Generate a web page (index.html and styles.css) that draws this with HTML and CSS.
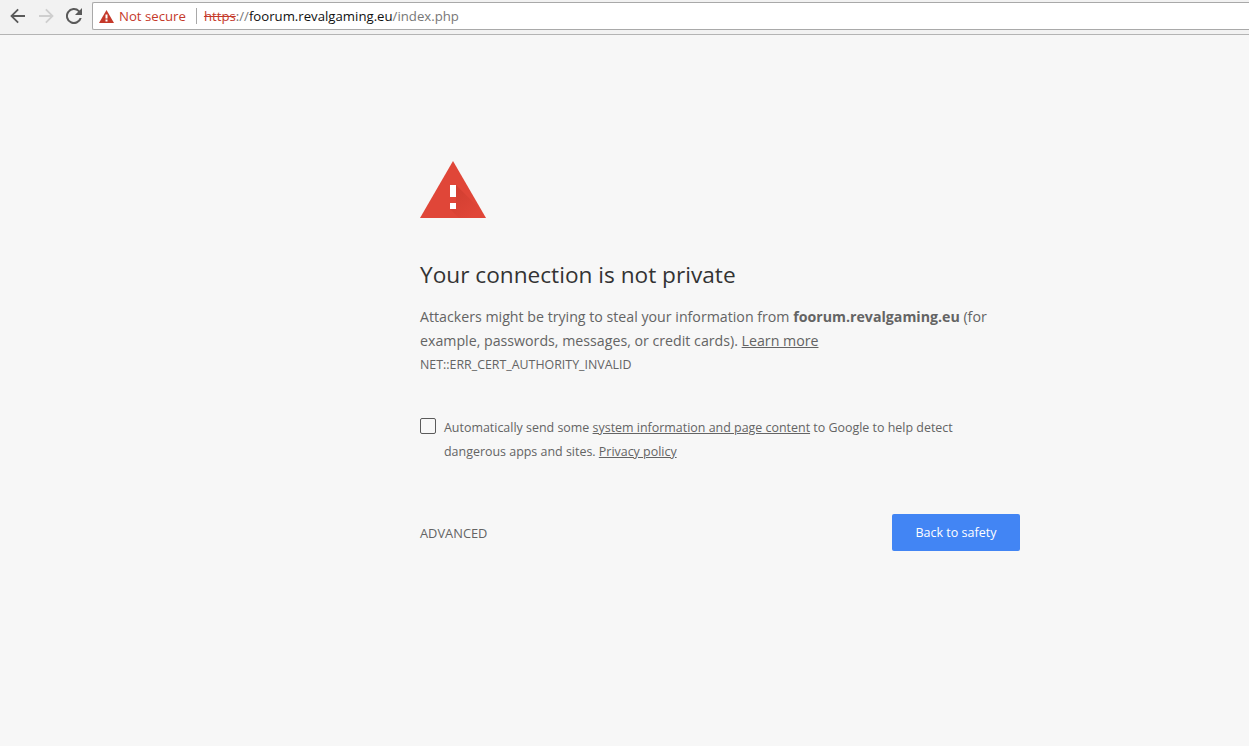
FILE: index.html
```html
<!DOCTYPE html>
<html lang="en">
<head>
    <meta charset="UTF-8">
    <meta name="viewport" content="width=device-width, initial-scale=1.0">
    <title>Privacy error</title>
    <link rel="stylesheet" href="styles.css">
</head>
<body>
    <div class="toolbar">
        <div class="nav-buttons">
            <svg class="nav-icon" width="16" height="16" viewBox="0 0 16 16"><path d="M15 7H3.800l5-5L7.500.7.2 8l7.300 7.300 1.300-1.300-5-5H15z" fill="#5a5a5a"/></svg>
            <svg class="nav-icon" width="16" height="16" viewBox="0 0 16 16"><path d="M1 7h11.200l-5-5L8.500.7 15.800 8l-7.300 7.300L7.200 14l5-5H1z" fill="#cfcfcf"/></svg>
            <svg class="nav-icon" width="16" height="16" viewBox="0 0 16 16"><path d="M13.600 2.400A8 8 0 1 0 15.700 10h-2.100a6 6 0 1 1-1.400-6.200L9 7h7V0z" fill="#5a5a5a"/></svg>
        </div>
        <div class="omnibox">
            <svg class="warn-icon" width="15" height="13" viewBox="0 0 15 13"><path d="M7.500 0L15 13H0z" fill="#c5392a"/><path d="M6.500 4.500h2v4h-2zM6.500 9.500h2v2h-2z" fill="#fff"/></svg>
            <span class="not-secure">Not secure</span>
            <span class="divider"></span>
            <span class="url"><span class="scheme">https</span><span class="url-dim">://</span>foorum.revalgaming.eu<span class="url-dim">/index.php</span></span>
        </div>
    </div>

    <div class="interstitial">
        <svg class="alert-icon" width="66" height="57" viewBox="0 0 66 57">
            <defs>
                <linearGradient id="alertShadow" x1="0.200" y1="0.100" x2="0.800" y2="0.800">
                    <stop offset="0" stop-color="#a8281c" stop-opacity="0.250"/>
                    <stop offset="1" stop-color="#a8281c" stop-opacity="0"/>
                </linearGradient>
            </defs>
            <path d="M33 0L66 57H0z" fill="#e04638"/>
            <path d="M36 24L62 50L66 57H39L30 48L36 42z" fill="url(#alertShadow)"/>
            <path d="M30 24h6v12h-6zM30 42h6v6h-6z" fill="#fff"/>
        </svg>
        <h1>Your connection is not private</h1>
        <p class="message">Attackers might be trying to steal your information from <strong>foorum.revalgaming.eu</strong> (for example, passwords, messages, or credit cards). <a href="#">Learn more</a></p>
        <div class="error-code">NET::ERR_CERT_AUTHORITY_INVALID</div>
        <div class="opt-in">
            <span class="checkbox"></span>
            <p>Automatically send some <a href="#">system information and page content</a> to Google to help detect dangerous apps and sites. <a href="#">Privacy policy</a></p>
        </div>
        <div class="actions">
            <span class="advanced">ADVANCED</span>
            <button class="safety-button">Back to safety</button>
        </div>
    </div>
</body>
</html>
```

FILE: styles.css
```css
body {
    font-family: 'Open Sans', 'Noto Sans', sans-serif;
    background-color: #f7f7f7;
    margin: 0;
    color: #646464;
    height: 746px;
    overflow: hidden;
}

/* Browser toolbar */
.toolbar {
    height: 34px;
    background-color: #f2f2f2;
    border-bottom: 1px solid #b4b4b4;
    display: flex;
    align-items: flex-start;
    padding-left: 10px;
}

.nav-buttons {
    display: flex;
    gap: 12px;
    padding-top: 8px;
    width: 82px;
}

.omnibox {
    flex: 1;
    height: 26px;
    margin-top: 2px;
    background-color: #fff;
    border: 1px solid #a9a9a9;
    border-right: none;
    border-radius: 2px 0 0 2px;
    display: flex;
    align-items: center;
    padding-left: 6px;
    font-size: 13.200px;
}

.warn-icon {
    margin-right: 5px;
}

.not-secure {
    color: #c5392a;
}

.divider {
    width: 1px;
    height: 16px;
    background-color: #a9a9a9;
    margin: 0 7px 0 10px;
}

.url {
    color: #111;
}

.scheme {
    color: #c5392a;
    text-decoration: line-through;
}

.url-dim {
    color: #777;
}

/* Warning page */
.interstitial {
    width: 600px;
    margin-left: 420px;
    padding-top: 126px;
}

.alert-icon {
    display: block;
}

h1 {
    font-size: 22.650px;
    font-weight: 400;
    color: #333;
    margin: 40px 0 13px;
    line-height: 34px;
}

.message {
    font-size: 14.200px;
    line-height: 24px;
    margin: 0;
}

.message strong {
    font-weight: 700;
}

a {
    color: #646464;
}

.error-code {
    font-size: 12.400px;
    line-height: 24px;
}

.opt-in {
    display: flex;
    gap: 8px;
    margin-top: 39px;
    font-size: 12.450px;
    line-height: 24px;
}

.opt-in p {
    margin: 0;
    width: 530px;
}

.checkbox {
    flex: none;
    width: 14px;
    height: 14px;
    margin-top: 2px;
    border: 1px solid #5a5a5a;
    border-radius: 2px;
}

.actions {
    display: flex;
    justify-content: space-between;
    align-items: center;
    margin-top: 50px;
}

.advanced {
    font-size: 12.850px;
}

.safety-button {
    width: 128px;
    height: 37px;
    background-color: #4285f4;
    color: #fff;
    border: none;
    border-radius: 2px;
    font-family: inherit;
    font-size: 12.500px;
}
```
